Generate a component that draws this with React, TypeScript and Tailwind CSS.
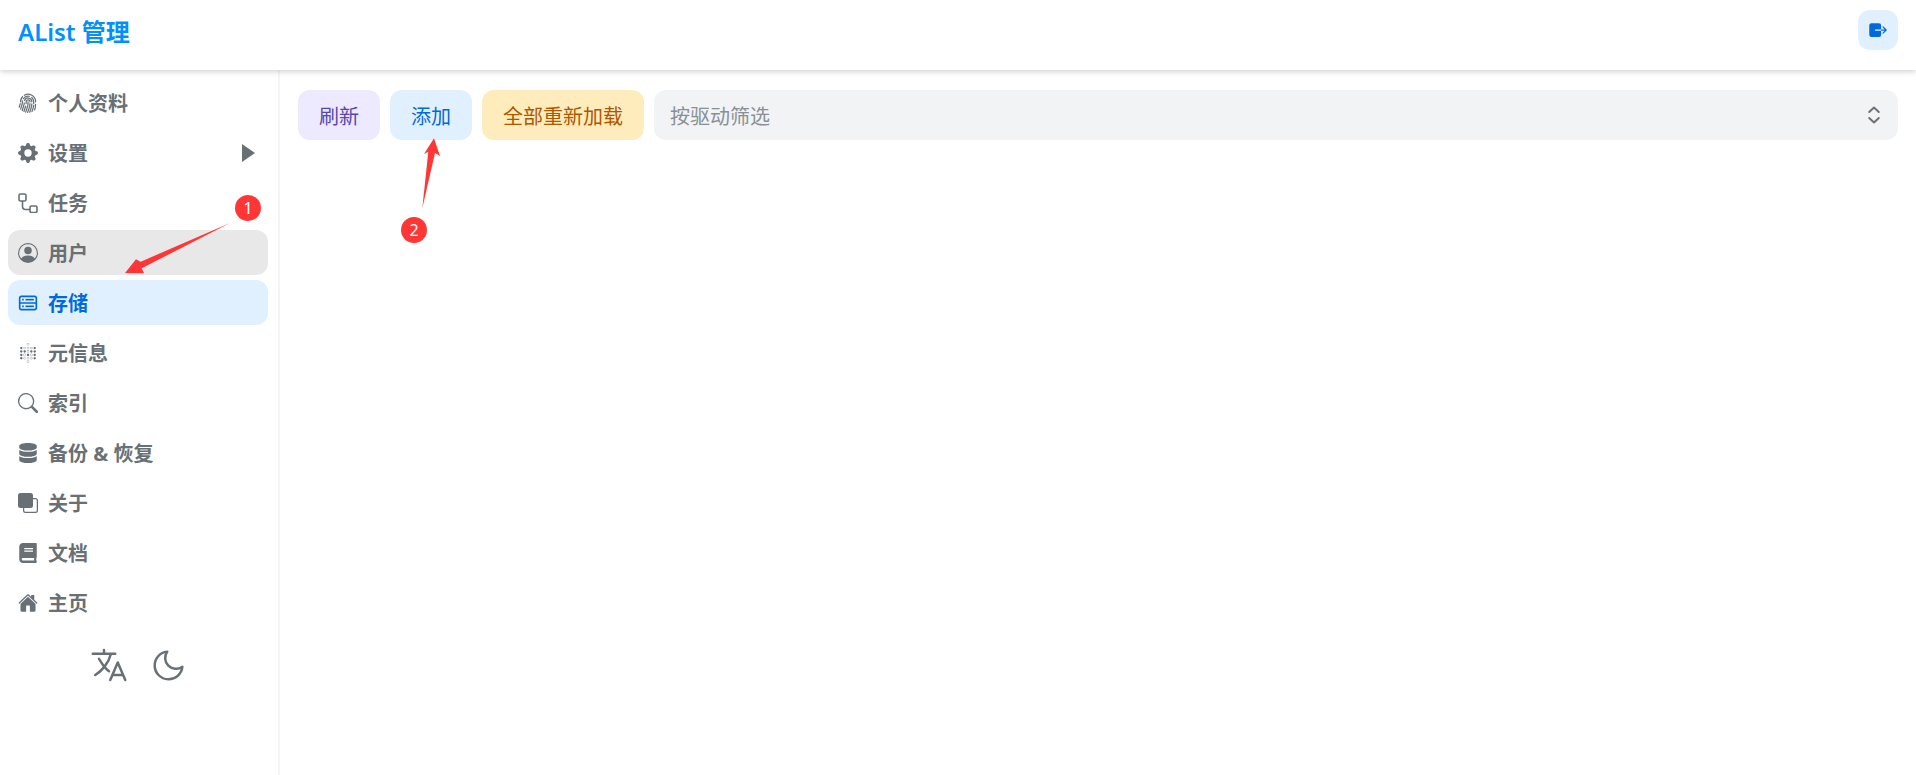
import type { ComponentType } from "react";
import { BsFingerprint, BsFront, BsGearFill, BsPersonCircle, BsSearch } from "react-icons/bs";
import { CgDatabase } from "react-icons/cg";
import { FaBook, FaDatabase } from "react-icons/fa";
import { FiMoon } from "react-icons/fi";
import { IoExit, IoHome, IoLanguageOutline } from "react-icons/io5";
import { SiMetabase } from "react-icons/si";

type IconProps = { className?: string };

function TasksIcon({ className }: IconProps) {
  return (
    <svg viewBox="0 0 20 20" fill="none" stroke="currentColor" strokeWidth="1.6" className={className}>
      <rect x="1" y="1" width="7" height="7" rx="1.5" />
      <path d="M4.5 8v5.5a3 3 0 0 0 3 3H12" />
      <rect x="12" y="13" width="7" height="6.5" rx="1.5" />
    </svg>
  );
}

const menu: { label: string; icon: ComponentType<IconProps>; hover?: boolean; active?: boolean; caret?: boolean }[] = [
  { label: "个人资料", icon: BsFingerprint },
  { label: "设置", icon: BsGearFill, caret: true },
  { label: "任务", icon: TasksIcon },
  { label: "用户", icon: BsPersonCircle, hover: true },
  { label: "存储", icon: CgDatabase, active: true },
  { label: "元信息", icon: SiMetabase },
  { label: "索引", icon: BsSearch },
  { label: "备份 & 恢复", icon: FaDatabase },
  { label: "关于", icon: BsFront },
  { label: "文档", icon: FaBook },
  { label: "主页", icon: IoHome },
];

function MenuItem({ item }: { item: (typeof menu)[number] }) {
  const Icon = item.icon;
  return (
    <a
      className={`flex h-[45px] items-center gap-[10px] rounded-xl pl-[10px] pr-[13px] text-[20px] font-bold ${
        item.active ? "bg-[#e1f0ff] text-[#006adc]" : item.hover ? "bg-[#e8e8e8] text-[#687076]" : "text-[#687076]"
      }`}
    >
      <Icon className="h-5 w-5 shrink-0" />
      <span className="flex-1 pt-[3px]">{item.label}</span>
      {item.caret && (
        <svg viewBox="0 0 13 18" className="h-[18px] w-[13px] fill-current">
          <path d="M0 0 13 9 0 18z" />
        </svg>
      )}
    </a>
  );
}

export default function App() {
  return (
    <div className="relative flex h-[775px] flex-col overflow-hidden bg-white font-['Noto_Sans','Noto_Sans_CJK_SC',sans-serif]">
      <header className="relative z-10 flex h-[70px] shrink-0 items-center justify-between bg-white px-[18px] pb-[10px] shadow-[0_1px_6px_rgba(0,0,0,0.22)]">
        <h1 className="pt-[3px] text-[24px] font-semibold text-[#0091ff]">AList 管理</h1>
        <button className="flex h-10 w-10 items-center justify-center rounded-xl bg-[#e1f0ff] text-[#006adc]">
          <IoExit className="h-5 w-5" />
        </button>
      </header>

      <div className="flex flex-1">
        <aside className="flex w-[280px] shrink-0 flex-col border-r-2 border-[#f5f5f5] px-2 pt-[10px]">
          <nav className="flex flex-col gap-[5px] pr-[2px]">
            {menu.map((item) => (
              <MenuItem key={item.label} item={item} />
            ))}
          </nav>
          <div className="mt-[20px] flex items-center justify-center gap-[21px] pr-[3px] text-[#687076]">
            <IoLanguageOutline className="h-10 w-10" />
            <FiMoon className="h-[37px] w-[37px] stroke-[1.6]" />
          </div>
        </aside>

        <main className="flex flex-1 items-start gap-[10px] px-[18px] pt-5 text-[20px]">
          <button className="h-[50px] rounded-xl bg-[#ede9fe] px-[21px] pt-[3px] text-[#5746af]">刷新</button>
          <button className="h-[50px] rounded-xl bg-[#e1f0ff] px-[21px] pt-[3px] text-[#006adc]">添加</button>
          <button className="h-[50px] rounded-xl bg-[#ffecbc] px-[21px] pt-[3px] text-[#ad5700]">全部重新加载</button>
          <div className="flex h-[50px] flex-1 items-center justify-between rounded-xl bg-[#f1f3f5] pl-4 pr-3 text-[#889096]">
            <span className="pt-[3px]">按驱动筛选</span>
            <svg viewBox="0 0 20 20" fill="none" stroke="#687076" strokeWidth="1.6" strokeLinecap="round" strokeLinejoin="round" className="h-6 w-6">
              <path d="M6 7.5 10 3.8l4 3.7M6 12.5l4 3.7 4-3.7" />
            </svg>
          </div>
        </main>
      </div>

      {/* red annotations drawn over the screenshot */}
      <svg className="pointer-events-none absolute inset-0 z-20 h-[775px] w-[1916px] fill-[#ff3636]">
        <polygon points="230,223 140.7,261.7 136,259.3 125,273 144,273.3 141.7,268.3" />
        <polygon points="422.3,208.3 435,153 440,156 434,138.3 424,154 428.3,151.7" />
      </svg>
      <div className="absolute left-[235px] top-[195px] z-20 flex h-[26px] w-[26px] items-center justify-center rounded-full bg-[#ff3636] text-[16px] text-white">
        1
      </div>
      <div className="absolute left-[401px] top-[217px] z-20 flex h-[26px] w-[26px] items-center justify-center rounded-full bg-[#ff3636] text-[16px] text-white">
        2
      </div>
    </div>
  );
}
